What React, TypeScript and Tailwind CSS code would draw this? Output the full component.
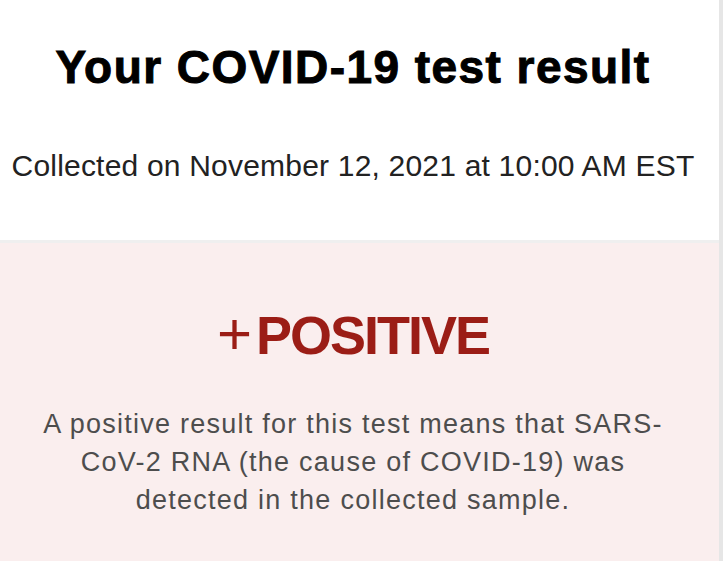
export default function App() {
  return (
    <div className="flex min-h-[561px] w-[723px] bg-[#e6e6e6] font-['Liberation_Sans',Arial,sans-serif]">
      <div className="flex w-[719px] flex-col">
        <section className="flex h-[240px] flex-col items-center bg-white pt-[39px] pr-[13px]">
          <h1 className="text-[46px] leading-[56px] font-bold tracking-[1.45px] text-black [-webkit-text-stroke:1px_black]">
            Your COVID-19 test result
          </h1>
          <p className="mt-[53px] text-[30px] leading-[36px] tracking-[0.2px] whitespace-nowrap text-[#222]">
            Collected on November 12, 2021 at 10:00 AM EST
          </p>
        </section>
        <div className="h-[3px] bg-[#efefef]" />
        <section className="flex flex-1 flex-col items-center bg-[#faeeee] pt-[61px] pr-[13px] pb-10">
          <h2 className="flex items-baseline text-[54px] leading-[60px] font-bold tracking-[-2px] text-[#9b1d16]">
            <span className="mr-[4px] text-[60px] font-normal tracking-normal">+</span>
            POSITIVE
          </h2>
          <p className="mt-[40px] text-center text-[27px] leading-[38px] tracking-[1.25px] text-[#4d4d4d]">
            A positive result for this test means that SARS-
            <br />
            CoV-2 RNA (the cause of COVID-19) was
            <br />
            detected in the collected sample.
          </p>
        </section>
      </div>
    </div>
  );
}
